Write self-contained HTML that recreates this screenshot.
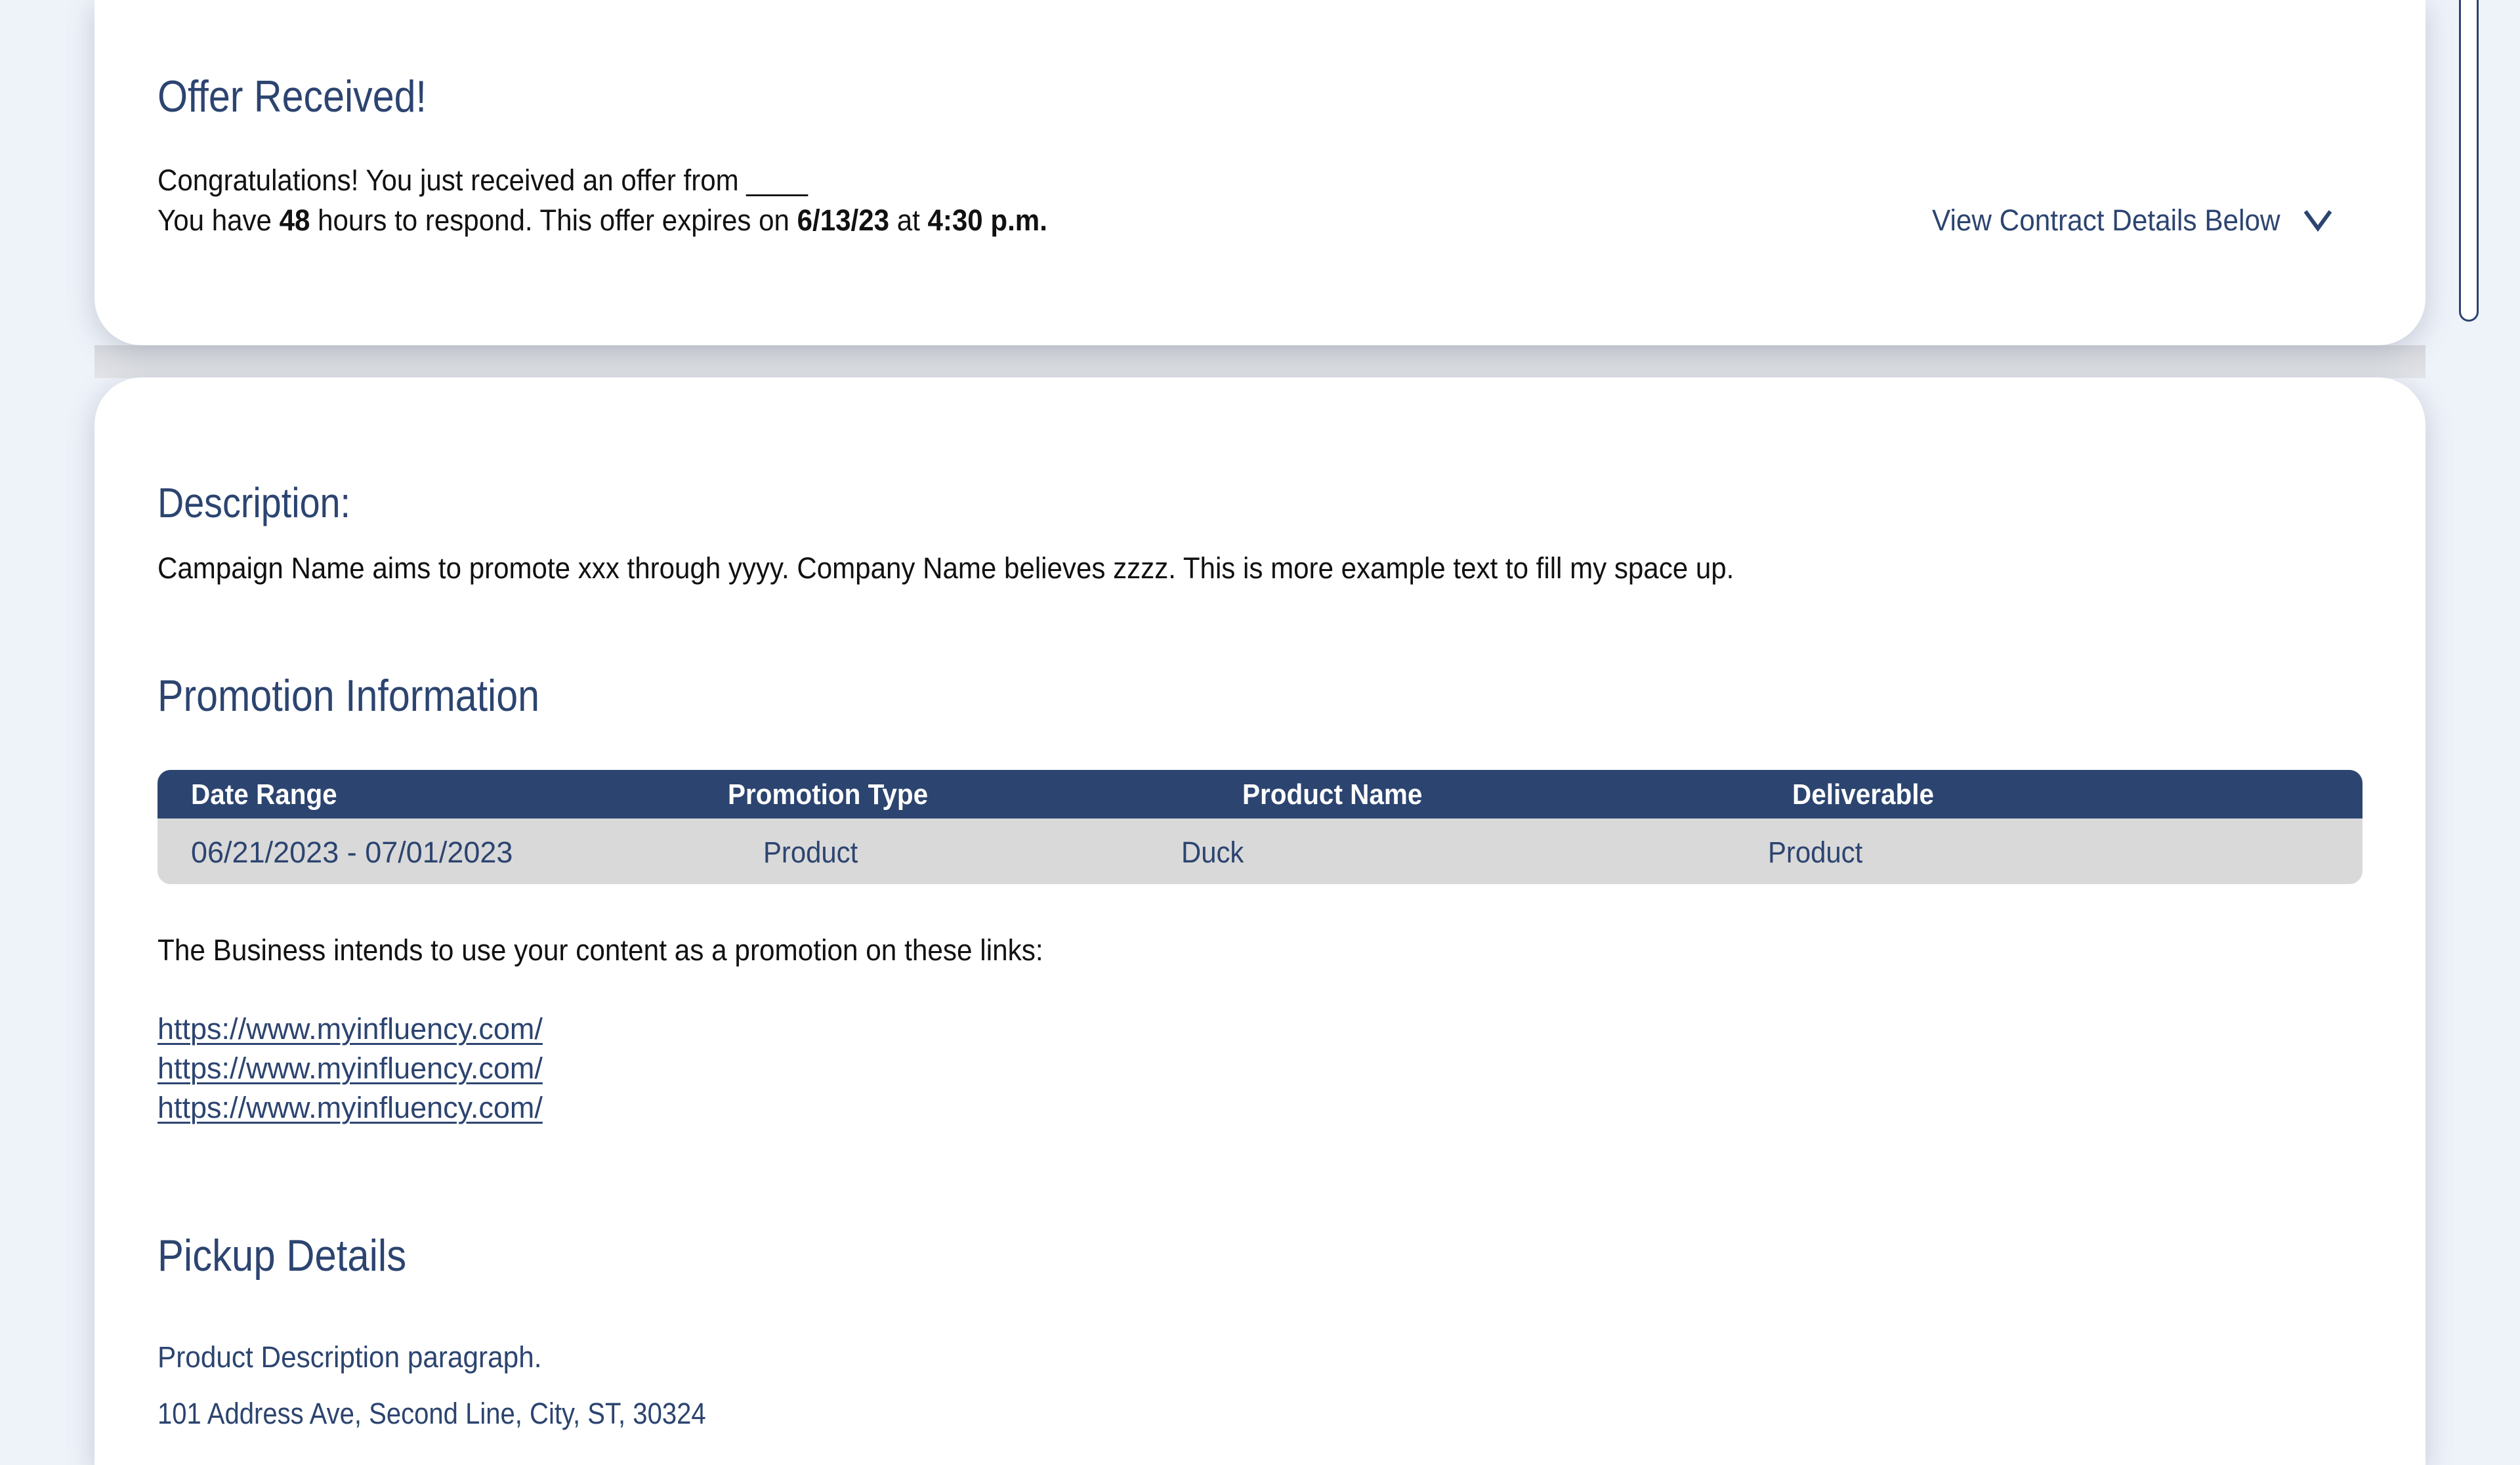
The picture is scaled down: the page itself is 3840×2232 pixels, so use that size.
<!DOCTYPE html>
<html><head><meta charset="utf-8"><style>
*{margin:0;padding:0;box-sizing:border-box}
html,body{width:3840px;height:2232px;overflow:hidden;background:#eef2f9;font-family:"Liberation Sans Narrow","Liberation Sans",sans-serif}
#w{position:relative;width:3840px;height:2232px;overflow:hidden}
.card{position:absolute;left:144px;width:3552px;background:#fff;box-shadow:0 10px 40px rgba(120,130,150,.35)}
.t{position:absolute;white-space:nowrap;line-height:1;transform-origin:0 50%}
.navy{color:#2c4470}
.h{font-size:68px;color:#2c4470;transform:scaleX(.87)}
.b{font-size:45px;color:#111;transform:scaleX(.935)}
a{color:#2c4470;text-decoration:underline;text-decoration-thickness:3px;text-underline-offset:6px}
.th{font-size:44px;color:#fff;font-weight:bold;transform:scaleX(.92)}
</style></head><body><div id="w">
<div style="position:absolute;left:144px;top:526px;width:3552px;height:50px;background:linear-gradient(#d6d8dd,#e2e4e8)"></div>
<div class="card" style="top:0;height:526px;border-radius:0 0 72px 72px"></div>
<div class="card" style="top:575px;height:1657px;border-radius:72px 72px 0 0"></div>
<div style="position:absolute;left:3747px;top:0;width:30px;height:490px;border:3px solid #2c4470;border-top:none;border-radius:0 0 15px 15px;background:#fff"></div>

<div class="t h" style="left:240px;top:113px">Offer Received!</div>
<div class="t b" style="left:240px;top:252px">Congratulations! You just received an offer from ____</div>
<div class="t b" style="left:240px;top:313px">You have <b>48</b> hours to respond. This offer expires on <b>6/13/23</b> at <b>4:30 p.m.</b></div>
<div class="t navy" style="left:2944px;top:313px;font-size:45px;transform:scaleX(.94)">View Contract Details Below</div>
<svg style="position:absolute;left:3510px;top:318px" width="44" height="36" viewBox="0 0 44 36"><path d="M3 4 L22 30 L41 4" fill="none" stroke="#2c4470" stroke-width="6"/></svg>

<div class="t h" style="left:240px;top:734px;font-size:64px">Description:</div>
<div class="t b" style="left:240px;top:843px">Campaign Name aims to promote xxx through yyyy. Company Name believes zzzz. This is more example text to fill my space up.</div>

<div class="t h" style="left:240px;top:1026px">Promotion Information</div>
<div style="position:absolute;left:240px;top:1173px;width:3360px;height:174px;border-radius:20px;background:#d9d9d9;overflow:hidden">
<div style="height:74px;background:#2c4470"></div></div>
<div class="t th" style="left:291px;top:1189px">Date Range</div>
<div class="t th" style="left:1109px;top:1189px">Promotion Type</div>
<div class="t th" style="left:1893px;top:1189px">Product Name</div>
<div class="t th" style="left:2731px;top:1189px">Deliverable</div>
<div class="t navy" style="left:291px;top:1276px;font-size:45px">06/21/2023 - 07/01/2023</div>
<div class="t navy" style="left:1163px;top:1276px;font-size:45px;transform:scaleX(.93)">Product</div>
<div class="t navy" style="left:1800px;top:1276px;font-size:45px;transform:scaleX(.93)">Duck</div>
<div class="t navy" style="left:2694px;top:1276px;font-size:45px;transform:scaleX(.93)">Product</div>

<div class="t b" style="left:240px;top:1425px;transform:scaleX(.94)">The Business intends to use your content as a promotion on these links:</div>
<div class="t" style="left:240px;top:1545px;font-size:45px"><a>https://www.myinfluency.com/</a></div>
<div class="t" style="left:240px;top:1605px;font-size:45px"><a>https://www.myinfluency.com/</a></div>
<div class="t" style="left:240px;top:1665px;font-size:45px"><a>https://www.myinfluency.com/</a></div>

<div class="t h" style="left:240px;top:1879px;transform:scaleX(.88)">Pickup Details</div>
<div class="t navy" style="left:240px;top:2045px;font-size:45px;transform:scaleX(.94)">Product Description paragraph.</div>
<div class="t navy" style="left:240px;top:2131px;font-size:45px;transform:scaleX(.89)">101 Address Ave, Second Line, City, ST, 30324</div>
</div></body></html>
